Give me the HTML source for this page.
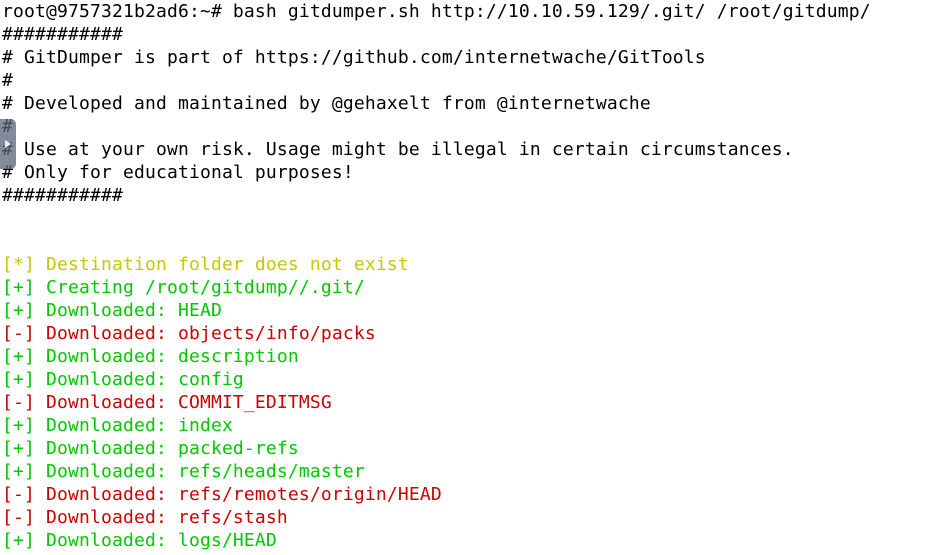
<!DOCTYPE html>
<html><head><meta charset="utf-8"><style>
html,body{margin:0;padding:0;background:#fff;width:943px;height:555px;overflow:hidden}
pre{margin:0;padding:0 0 0 2px;font-family:"DejaVu Sans Mono","Liberation Mono",monospace;font-size:18px;line-height:23px;letter-spacing:0.16px;color:#000;white-space:pre}
.y{color:#c8c800}.g{color:#00c800}.r{color:#cc0000}
.w{position:absolute;left:0;top:119px;width:16px;height:50px;background:rgba(90,100,120,0.75);border-radius:0 5px 5px 0}
.w:after{content:"";position:absolute;left:5px;top:21px;border-left:6px solid #eee;border-top:4px solid transparent;border-bottom:4px solid transparent}
</style></head><body>
<pre>root@9757321b2ad6:~# bash gitdumper.sh http://10.10.59.129/.git/ /root/gitdump/
###########
# GitDumper is part of https://github.com/internetwache/GitTools
#
# Developed and maintained by @gehaxelt from @internetwache
#
# Use at your own risk. Usage might be illegal in certain circumstances.
# Only for educational purposes!
###########


<span class="y">[*] Destination folder does not exist</span>
<span class="g">[+] Creating /root/gitdump//.git/</span>
<span class="g">[+] Downloaded: HEAD</span>
<span class="r">[-] Downloaded: objects/info/packs</span>
<span class="g">[+] Downloaded: description</span>
<span class="g">[+] Downloaded: config</span>
<span class="r">[-] Downloaded: COMMIT_EDITMSG</span>
<span class="g">[+] Downloaded: index</span>
<span class="g">[+] Downloaded: packed-refs</span>
<span class="g">[+] Downloaded: refs/heads/master</span>
<span class="r">[-] Downloaded: refs/remotes/origin/HEAD</span>
<span class="r">[-] Downloaded: refs/stash</span>
<span class="g">[+] Downloaded: logs/HEAD</span></pre>
<div class="w"></div>
</body></html>
